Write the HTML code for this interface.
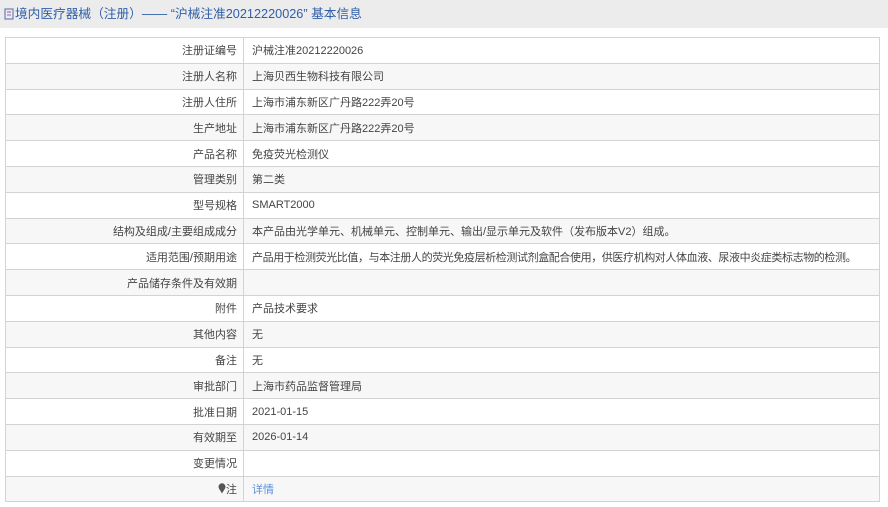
<!DOCTYPE html>
<html><head><meta charset="utf-8"><style>
*{margin:0;padding:0;box-sizing:border-box}
body{width:888px;height:507px;background:#fff;font-family:"Liberation Sans","Noto Sans CJK SC",sans-serif;font-size:11px;color:#444;overflow:hidden}
.hd{height:28px;background:#ececec;color:#2f5ea8;font-size:12.7px;line-height:28px;padding-left:4px;white-space:nowrap}
.hd svg{vertical-align:-2px;margin-right:1px}
table{position:absolute;left:5px;top:37px;width:875px;border-collapse:collapse;table-layout:fixed}
td{border:1px solid #d3d3d3;height:25.8px;padding:0 8px;white-space:nowrap;overflow:hidden}
td.l{text-align:right;padding-right:6px}
tr:nth-child(even) td{background:#f7f7f7}
a{color:#5b8fe0;text-decoration:none}
</style></head><body>
<div class="hd"><svg width="10" height="12" viewBox="0 0 10 12"><rect x="1" y="1" width="8" height="10" fill="none" stroke="#6a7fc0" stroke-width="1.2"/><line x1="3" y1="4" x2="7" y2="4" stroke="#d04080"/><line x1="3" y1="7" x2="7" y2="7" stroke="#6a7fc0"/></svg>境内医疗器械（注册）—— “沪械注准20212220026” 基本信息</div>
<table>
<colgroup><col style="width:238px"><col></colgroup>
<tr><td class="l">注册证编号</td><td>沪械注准20212220026</td></tr>
<tr><td class="l">注册人名称</td><td>上海贝西生物科技有限公司</td></tr>
<tr><td class="l">注册人住所</td><td>上海市浦东新区广丹路222弄20号</td></tr>
<tr><td class="l">生产地址</td><td>上海市浦东新区广丹路222弄20号</td></tr>
<tr><td class="l">产品名称</td><td>免疫荧光检测仪</td></tr>
<tr><td class="l">管理类别</td><td>第二类</td></tr>
<tr><td class="l">型号规格</td><td>SMART2000</td></tr>
<tr><td class="l">结构及组成/主要组成成分</td><td>本产品由光学单元、机械单元、控制单元、输出/显示单元及软件（发布版本V2）组成。</td></tr>
<tr><td class="l">适用范围/预期用途</td><td style="letter-spacing:-0.4px">产品用于检测荧光比值，与本注册人的荧光免疫层析检测试剂盒配合使用，供医疗机构对人体血液、尿液中炎症类标志物的检测。</td></tr>
<tr><td class="l">产品储存条件及有效期</td><td></td></tr>
<tr><td class="l">附件</td><td>产品技术要求</td></tr>
<tr><td class="l">其他内容</td><td>无</td></tr>
<tr><td class="l">备注</td><td>无</td></tr>
<tr><td class="l">审批部门</td><td>上海市药品监督管理局</td></tr>
<tr><td class="l">批准日期</td><td>2021-01-15</td></tr>
<tr><td class="l">有效期至</td><td>2026-01-14</td></tr>
<tr><td class="l">变更情况</td><td></td></tr>
<tr><td class="l"><svg width="8" height="11" viewBox="0 0 8 11" style="vertical-align:-1px"><path d="M4 10.5C2 7 .5 5.5.5 3.8a3.5 3.5 0 0 1 7 0C7.5 5.5 6 7 4 10.5z" fill="#555"/></svg>注</td><td><a>详情</a></td></tr>
</table>
</body></html>
